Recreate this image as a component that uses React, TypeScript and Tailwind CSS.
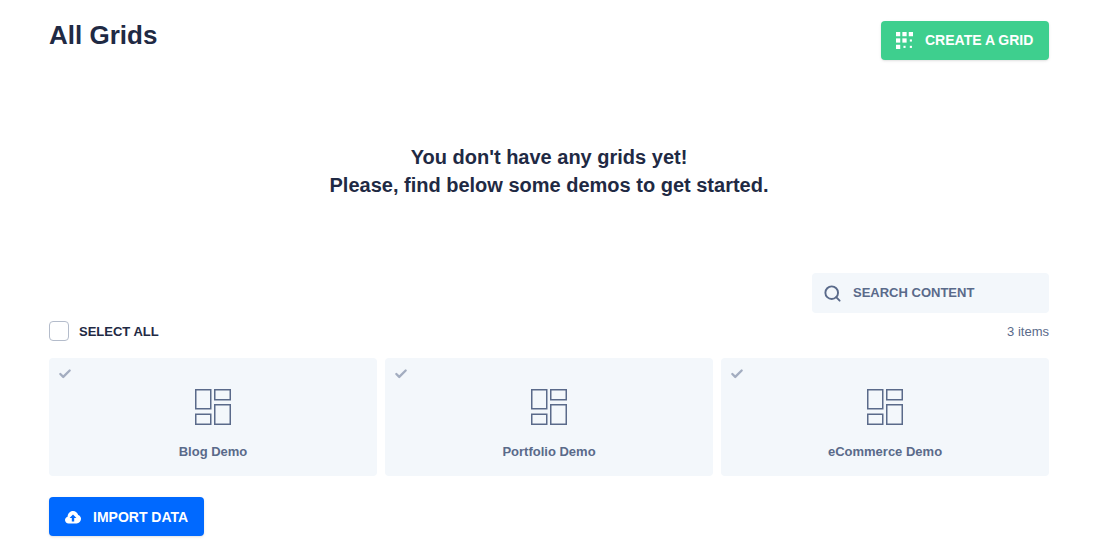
import React from "react";
import { Check, Search } from "lucide-react";

const demos = ["Blog Demo", "Portfolio Demo", "eCommerce Demo"];

function GridDots() {
  const cells = [
    [0, 0, 4, 4], [6, 0, 4, 4], [12, 0, 4, 4],
    [0, 6, 4, 4], [6, 6, 4, 4], [13, 7, 2, 2],
    [0, 12, 4, 4], [7, 13, 2, 2], [13, 13, 2, 2],
  ];
  return (
    <svg width="17" height="17" viewBox="0 0 16 16" fill="white">
      {cells.map(([x, y, w, h], i) => (
        <rect key={i} x={x} y={y} width={w} height={h} />
      ))}
    </svg>
  );
}

function LayoutIcon() {
  return (
    <svg width="36" height="36" viewBox="0 0 36 36" fill="none" stroke="#5a6a8a" strokeWidth="1.5">
      <rect x="0.75" y="0.75" width="15" height="19" />
      <rect x="19.75" y="0.75" width="15.5" height="10" />
      <rect x="0.75" y="25.25" width="15" height="10" />
      <rect x="19.75" y="15.75" width="15.5" height="19.5" />
    </svg>
  );
}

function CloudUpload() {
  return (
    <svg width="16" height="14" viewBox="0 0 16 14">
      <path
        fill="white"
        d="M3.6 13.5C1.6 13.5 0 12 0 10.1c0-1.6 1.1-2.9 2.6-3.3C2.7 3.5 5 1 8 1c2.5 0 4.6 1.7 5.2 4 1.6.5 2.8 2 2.8 3.6 0 2.7-2 4.9-4.4 4.9z"
      />
      <path fill="#0069ff" d="M8 4.5l3.4 3.6H9.2v3.4H6.8V8.1H4.6z" />
    </svg>
  );
}

export default function App() {
  return (
    <div className="h-[560px] w-[1103px] overflow-hidden bg-white font-['Liberation_Sans',Arial,sans-serif] text-[#1f2a44]">
      <div className="ml-[49px] w-[1000px] pt-[21px]">
        <div className="flex items-start justify-between">
          <h1 className="text-[26px] leading-[29px] font-bold">All Grids</h1>
          <button
            type="button"
            className="flex h-[39px] w-[168px] items-center rounded-[4px] bg-[#3ecf8e] pl-[15px] text-[14px] font-bold text-white shadow-sm"
          >
            <GridDots />
            <span className="ml-[12px]">CREATE A GRID</span>
          </button>
        </div>

        <div className="mt-[83px] text-center text-[20px] leading-[28px] font-bold">
          <p>You don't have any grids yet!</p>
          <p>Please, find below some demos to get started.</p>
        </div>

        <div className="mt-[74px] flex justify-end">
          <div className="flex h-[40px] w-[237px] items-center rounded-[4px] bg-[#f3f7fb] pl-[11px] text-[13px] font-bold text-[#5a6a8a]">
            <Search size={19} strokeWidth={2.4} />
            <span className="ml-[11px]">SEARCH CONTENT</span>
          </div>
        </div>

        <div className="mt-[8px] flex h-[20px] items-center justify-between">
          <label className="flex items-center">
            <span className="h-[20px] w-[20px] rounded-[4px] border border-[#b4bccb] bg-white" />
            <span className="ml-[10px] pt-[2px] text-[13px] leading-[16px] font-bold">SELECT ALL</span>
          </label>
          <span className="pt-[2px] text-[13px] leading-[16px] text-[#5a6a8a]">3 items</span>
        </div>

        <div className="mt-[17px] grid grid-cols-3 gap-[8px]">
          {demos.map((name) => (
            <div key={name} className="relative flex h-[118px] flex-col items-center rounded-[4px] bg-[#f3f7fb] pt-[31px]">
              <Check size={14} strokeWidth={4} className="absolute top-[9px] left-[9px] text-[#a3adc0]" />
              <LayoutIcon />
              <span className="mt-[17px] text-[13px] font-bold text-[#5a6a8a]">{name}</span>
            </div>
          ))}
        </div>

        <button
          type="button"
          className="mt-[21px] flex h-[39px] w-[155px] items-center rounded-[4px] bg-[#0069ff] pl-[16px] text-[14px] font-bold text-white shadow-sm"
        >
          <CloudUpload />
          <span className="ml-[12px] pt-px leading-[20px]">IMPORT DATA</span>
        </button>
      </div>
    </div>
  );
}
